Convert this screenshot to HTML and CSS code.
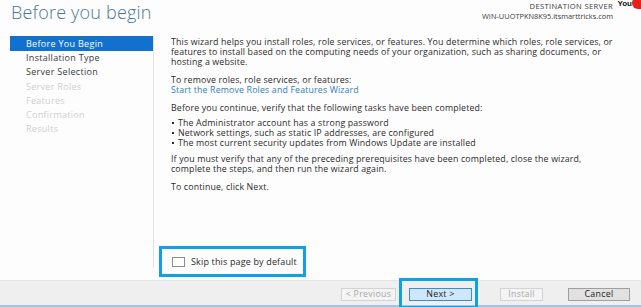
FILE: index.html
```html
<!DOCTYPE html>
<html>
<head>
<meta charset="utf-8">
<link rel="stylesheet" href="styles.css">
</head>
<body>
<div class="window">
  <div class="header">
    <h1 class="title">Before you begin</h1>
    <div class="dest">
      <div class="dest-label">DESTINATION SERVER</div>
      <div class="dest-name">WIN-UUOTPKN8K95.itsmarttricks.com</div>
    </div>
  </div>
  <div class="main">
    <ul class="nav">
      <li class="nav-item selected">Before You Begin</li>
      <li class="nav-item">Installation Type</li>
      <li class="nav-item">Server Selection</li>
      <li class="nav-item disabled">Server Roles</li>
      <li class="nav-item disabled">Features</li>
      <li class="nav-item disabled">Confirmation</li>
      <li class="nav-item disabled">Results</li>
    </ul>
    <div class="content">
      <div class="text">
        <p class="p1">This wizard helps you install roles, role services, or features. You determine which roles, role services, or<br>features to install based on the computing needs of your organization, such as sharing documents, or<br>hosting a website.</p>
        <p class="p2">To remove roles, role services, or features:<br><span class="link">Start the Remove Roles and Features Wizard</span></p>
        <p class="p3">Before you continue, verify that the following tasks have been completed:</p>
        <ul class="tasks">
          <li>The Administrator account has a strong password</li>
          <li>Network settings, such as static IP addresses, are configured</li>
          <li>The most current security updates from Windows Update are installed</li>
        </ul>
        <p class="p4">If you must verify that any of the preceding prerequisites have been completed, close the wizard,<br>complete the steps, and then run the wizard again.</p>
        <p class="p5">To continue, click Next.</p>
      </div>
      <div class="skip">
        <span class="checkbox"></span>
        <span class="skip-label">Skip this page by default</span>
      </div>
    </div>
  </div>
  <div class="footer">
    <button class="btn disabled prev">&lt; Previous</button>
    <button class="btn next">Next &gt;</button>
    <button class="btn disabled install">Install</button>
    <button class="btn cancel">Cancel</button>
  </div>
  <div class="logo"><span class="logo-text">You</span><span class="logo-red"></span></div>
</div>
</body>
</html>
```

FILE: styles.css
```css
html, body {
  margin: 0;
  padding: 0;
}
body {
  width: 641px;
  height: 307px;
  overflow: hidden;
  background: #fdfdfd;
  font-family: "Open Sans", "Noto Sans", sans-serif;
  color: #2b2b2b;
}
.window {
  position: relative;
  width: 641px;
  height: 307px;
  display: flex;
  flex-direction: column;
}
.header {
  height: 36px;
  display: flex;
  justify-content: space-between;
  align-items: flex-start;
}
.title {
  margin: 0;
  padding: 0 0 0 11px;
  font-weight: 300;
  font-size: 18px;
  letter-spacing: 0.2px;
  line-height: 25px;
  color: #4a7796;
}
.dest {
  padding: 2px 28px 0 0;
  text-align: right;
  font-size: 7.6px;
  letter-spacing: 0.35px;
  line-height: 9.5px;
  color: #3a3a3a;
}
.dest-name {
  font-size: 7.4px;
  letter-spacing: 0;
}
.main {
  height: 244px;
  display: flex;
}
.nav {
  list-style: none;
  margin: 0 0 0 10px;
  padding: 0;
  width: 143px;
  height: 232px;
  border-right: 1px solid #e2e2e2;
  font-size: 9px;
  letter-spacing: 0.3px;
}
.nav-item {
  height: 14.3px;
  line-height: 14.3px;
  padding-left: 16px;
  color: #3a3a3a;
}
.nav-item.selected {
  background: #1470cf;
  color: #ffffff;
  height: 15px;
  line-height: 15px;
}
.nav-item.disabled {
  color: #d0d0d0;
}
.content {
  flex: 1;
  display: flex;
  flex-direction: column;
}
.text {
  padding: 1px 0 0 17px;
  font-size: 8.8px;
  letter-spacing: 0.15px;
  line-height: 10px;
  color: #2b2b2b;
}
.text p {
  margin: 0;
}
.p2, .p3, .p5 { margin-top: 8px !important; }
.p4 { margin-top: 6px !important; }
.link {
  color: #3580b5;
}
.tasks {
  list-style: none;
  margin: 5px 0 0 0;
  padding: 0;
}
.tasks li {
  position: relative;
  padding-left: 7px;
}
.tasks li::before {
  content: "";
  position: absolute;
  left: 1px;
  top: 4px;
  width: 2px;
  height: 2px;
  background: #2b2b2b;
}
.skip {
  margin: auto 0 3px 5px;
  height: 25px;
  width: 131px;
  border: 3px solid #0ba3e6;
  display: flex;
  align-items: center;
  padding-left: 10px;
}
.checkbox {
  width: 11px;
  height: 8px;
  border: 1px solid #8d8d8d;
  background: #ffffff;
}
.skip-label {
  margin-left: 6px;
  font-size: 9px;
  letter-spacing: 0.15px;
  white-space: nowrap;
  color: #2b2b2b;
}
.footer {
  height: 27px;
  box-sizing: border-box;
  border-top: 1px solid #e6e6e6;
  border-bottom: 2px solid #a9c3e0;
  background: #efefef;
  display: flex;
  justify-content: flex-end;
  align-items: flex-start;
  padding-right: 11px;
}
.btn {
  margin-top: 7px;
  height: 13px;
  padding: 0;
  font-family: "Open Sans", "Noto Sans", sans-serif;
  font-size: 8.8px;
  letter-spacing: 0.3px;
  line-height: 11px;
  border: 1px solid #acacac;
  background: #e5e5e5;
  color: #222;
  position: relative;
}
.btn.disabled {
  border-color: #d3d3d3;
  background: #f4f4f4;
  color: #a8a8a8;
}
.prev { width: 55px; }
.next {
  width: 63px;
  margin-left: 13px;
  background: #cfe7fa;
  border-color: #3d8ccc;
}
.next::after {
  content: "";
  position: absolute;
  left: -11px;
  right: -7px;
  top: -11px;
  bottom: -9px;
  border: 3px solid #0ba3e6;
}
.install {
  width: 43px;
  margin-left: 28px;
}
.cancel {
  width: 62px;
  margin-left: 25px;
  background: #e1e1e1;
  border-color: #9f9f9f;
}
.logo {
  position: absolute;
  right: 0;
  top: -3px;
  display: flex;
  align-items: center;
}
.logo-text {
  font-family: "Liberation Sans", Arial, sans-serif;
  font-weight: bold;
  font-size: 8px;
  line-height: 9px;
  color: #111;
}
.logo-red {
  width: 9px;
  height: 12px;
  border-radius: 6px 0 0 6px;
  background: #e62117;
}
```
